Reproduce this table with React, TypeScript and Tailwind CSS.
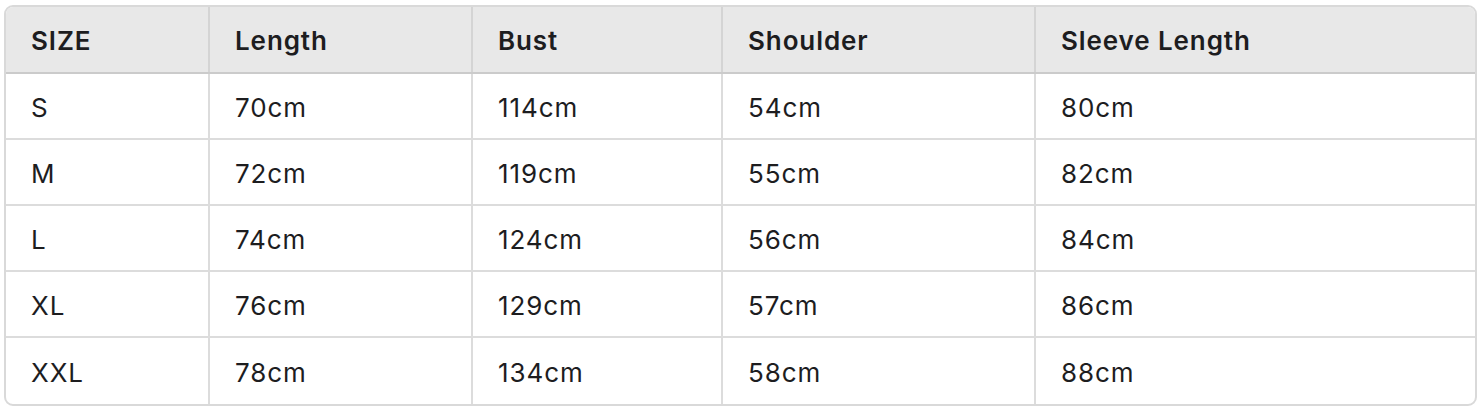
import React from "react";

const COLUMNS = ["SIZE", "Length", "Bust", "Shoulder", "Sleeve Length"];

const ROWS = [
  ["S", "70cm", "114cm", "54cm", "80cm"],
  ["M", "72cm", "119cm", "55cm", "82cm"],
  ["L", "74cm", "124cm", "56cm", "84cm"],
  ["XL", "76cm", "129cm", "57cm", "86cm"],
  ["XXL", "78cm", "134cm", "58cm", "88cm"],
];

const WIDTHS = ["w-[202px]", "w-[263px]", "w-[250px]", "w-[313px]", "w-[441px]"];

const App = () => {
  return (
    <div className="min-h-screen bg-white pt-[5px] pl-[4px]" style={{ fontFamily: "Inter, 'Liberation Sans', sans-serif" }}>
      <div className="w-[1473px] overflow-hidden rounded-[9px] border-2 border-[#d9d9d9] text-[26px] tracking-[0.9px] text-[#1d1d1f]">
        <div className="flex h-[67px] border-b-2 border-[#cbcbcb] bg-[#e8e8e8] font-semibold">
          {COLUMNS.map((col, i) => (
            <div
              key={col}
              className={`${WIDTHS[i]} flex items-center pt-[2px] ${i > 0 ? "border-l-2 border-[#d4d4d4] pl-[25px]" : "pl-[25px]"}`}
            >
              {col}
            </div>
          ))}
        </div>
        {ROWS.map((row, r) => (
          <div key={row[0]} className={`flex h-[66px] ${r < ROWS.length - 1 ? "border-b-2 border-[#dcdcdc]" : ""}`}>
            {row.map((cell, i) => (
              <div
                key={i}
                className={`${WIDTHS[i]} flex items-center pt-[2px] ${i > 0 ? "border-l-2 border-[#dcdcdc] pl-[25px]" : "pl-[25px]"}`}
              >
                {cell}
              </div>
            ))}
          </div>
        ))}
      </div>
    </div>
  );
};

export default App;
